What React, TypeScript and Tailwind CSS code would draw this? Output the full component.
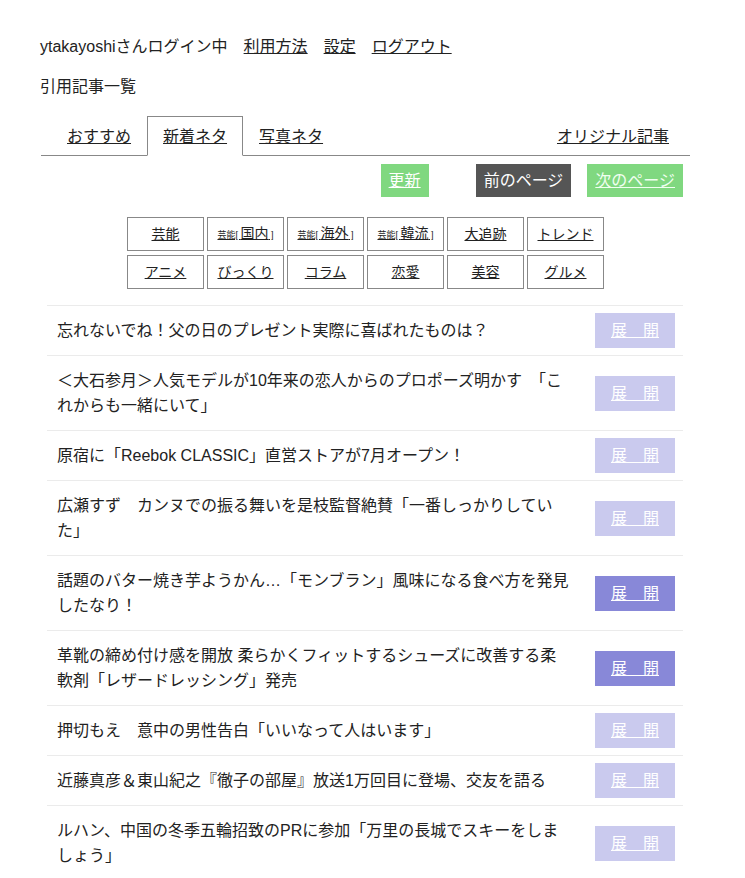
import React from "react";

const FONT = { fontFamily: '"Liberation Sans", "Noto Sans CJK JP", sans-serif' };

type Item = { lines: string[]; hot?: boolean };

const ITEMS: Item[] = [
  { lines: ["忘れないでね！父の日のプレゼント実際に喜ばれたものは？"] },
  { lines: ["＜大石参月＞人気モデルが10年来の恋人からのプロポーズ明かす　「こ", "れからも一緒にいて」"] },
  { lines: ["原宿に「Reebok CLASSIC」直営ストアが7月オープン！"] },
  { lines: ["広瀬すず　カンヌでの振る舞いを是枝監督絶賛「一番しっかりしてい", "た」"] },
  { lines: ["話題のバター焼き芋ようかん…「モンブラン」風味になる食べ方を発見", "したなり！"], hot: true },
  { lines: ["革靴の締め付け感を開放 柔らかくフィットするシューズに改善する柔", "軟剤「レザードレッシング」発売"], hot: true },
  { lines: ["押切もえ　意中の男性告白「いいなって人はいます」"] },
  { lines: ["近藤真彦＆東山紀之『徹子の部屋』放送1万回目に登場、交友を語る"] },
  { lines: ["ルハン、中国の冬季五輪招致のPRに参加「万里の長城でスキーをしま", "しょう」"] },
];

function Cat({ sub, name }: { sub?: boolean; name: string }) {
  return (
    <a className="flex h-[34px] w-[77px] items-center justify-center border border-[#888] text-[14px] text-[#222] underline">
      {sub ? (
        <span className="whitespace-nowrap">
          <span className="text-[9px]">芸能[ </span>
          {name}
          <span className="text-[9px]"> ]</span>
        </span>
      ) : (
        name
      )}
    </a>
  );
}

function Tab({ label, active }: { label: string; active?: boolean }) {
  return (
    <li
      className={
        "-mb-px flex h-[40px] items-center px-[15px] " +
        (active ? "border border-[#888] border-b-white bg-white" : "border border-transparent")
      }
    >
      <a className="underline">{label}</a>
    </li>
  );
}

export default function App() {
  return (
    <div className="min-h-screen bg-white pt-[34px] text-[16px] leading-[25px] text-[#222]" style={FONT}>
      <div className="ml-[40px] flex gap-4">
        <span>ytakayoshiさんログイン中</span>
        <a className="underline">利用方法</a>
        <a className="underline">設定</a>
        <a className="underline">ログアウト</a>
      </div>
      <div className="ml-[40px] mt-[15px]">引用記事一覧</div>

      <div className="ml-[41px] mt-[17px] w-[649px]">
        <ul className="flex border-b border-[#888] pl-[10px]">
          <Tab label="おすすめ" />
          <Tab label="新着ネタ" active />
          <Tab label="写真ネタ" />
          <li className="-mb-px ml-auto mr-[5px] flex h-[40px] items-center px-4">
            <a className="underline">オリジナル記事</a>
          </li>
        </ul>

        <div className="mt-[8px] flex justify-end gap-4 pr-[7px]">
          <a className="mr-[31px] flex h-[33px] items-center bg-[#80d880] px-[8px] text-white underline">更新</a>
          <a className="flex h-[33px] items-center bg-[#555555] px-[8px] text-white">前のページ</a>
          <a className="flex h-[33px] items-center bg-[#80d880] px-[8px] text-[#f0fff0] underline">次のページ</a>
        </div>

        <div className="mt-[20px] flex justify-center">
          <div className="grid grid-cols-6 gap-x-[3px] gap-y-[4px]">
            <Cat name="芸能" />
            <Cat sub name="国内" />
            <Cat sub name="海外" />
            <Cat sub name="韓流" />
            <Cat name="大追跡" />
            <Cat name="トレンド" />
            <Cat name="アニメ" />
            <Cat name="びっくり" />
            <Cat name="コラム" />
            <Cat name="恋愛" />
            <Cat name="美容" />
            <Cat name="グルメ" />
          </div>
        </div>

        <ul className="ml-[6px] mt-[16px] w-[636px]">
          {ITEMS.map((it, i) => (
            <li key={i} className="flex items-center border-t border-[#ebebeb]">
              <div className="flex-1 py-3 pl-[10px]">
                {it.lines.map((l, j) => (
                  <div key={j} className="whitespace-nowrap">
                    {l}
                  </div>
                ))}
              </div>
              <a
                className={
                  "mr-[8px] flex h-[35px] w-[80px] items-center justify-center text-white underline " +
                  (it.hot ? "bg-[#8888d8]" : "bg-[#cacaee]")
                }
              >
                展　開
              </a>
            </li>
          ))}
        </ul>
      </div>
    </div>
  );
}
